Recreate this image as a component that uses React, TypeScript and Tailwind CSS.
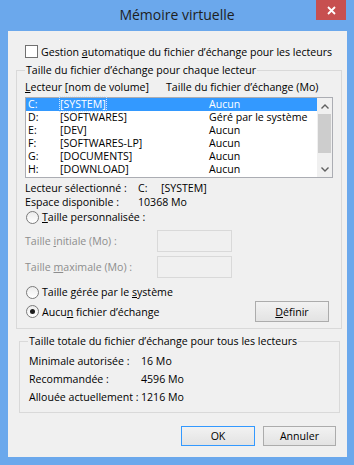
import React from "react";

const drives = [
  { letter: "C:", name: "[SYSTEM]", size: "Aucun" },
  { letter: "D:", name: "[SOFTWARES]", size: "Géré par le système" },
  { letter: "E:", name: "[DEV]", size: "Aucun" },
  { letter: "F:", name: "[SOFTWARES-LP]", size: "Aucun" },
  { letter: "G:", name: "[DOCUMENTS]", size: "Aucun" },
  { letter: "H:", name: "[DOWNLOAD]", size: "Aucun" },
];

function Radio({ checked }: { checked?: boolean }) {
  return (
    <span className="flex h-[13px] w-[13px] shrink-0 items-center justify-center rounded-full border border-[#7a7a7a] bg-gradient-to-b from-[#ececec] to-white">
      {checked && <span className="h-[5px] w-[5px] rounded-full bg-[#1c1c1c]" />}
    </span>
  );
}

function Button({ children, primary }: { children: React.ReactNode; primary?: boolean }) {
  return (
    <div
      className={
        "flex h-[20px] items-center justify-center border bg-gradient-to-b from-[#f2f2f2] to-[#e3e3e3] " +
        (primary ? "border-[#3399ff]" : "border-[#acacac]")
      }
    >
      {children}
    </div>
  );
}

export default function App() {
  return (
    <div className="flex h-[465px] w-[354px] flex-col bg-[#6ba8ec] pb-[8px] pl-[8px] pr-[7px] font-['Segoe_UI','Open_Sans',sans-serif] text-[10.6px] leading-[14px] text-black">
      {/* title bar */}
      <div className="relative -ml-[8px] -mr-[7px] flex h-[31px] shrink-0 items-start justify-center">
        <span className="pt-[6px] text-[14px] leading-[18px] text-[#1e1e1e]">Mémoire virtuelle</span>
        <div className="absolute right-[8px] top-0 flex h-[20px] w-[30px] items-center justify-center bg-[#c75050]">
          <svg width="9" height="9" viewBox="0 0 9 9">
            <path d="M1 1 L8 8 M8 1 L1 8" stroke="white" strokeWidth="1.8" />
          </svg>
        </div>
      </div>

      {/* client area */}
      <div className="flex flex-1 flex-col bg-[#f0f0f0]">
        <div className="ml-[17px] mt-[14px] flex h-[13px] items-center gap-[3px]">
          <span className="h-[13px] w-[13px] border border-[#707070] bg-white" />
          <span className="whitespace-nowrap">
            Gestion <u>a</u>utomatique du fichier d’échange pour les lecteurs
          </span>
        </div>

        <fieldset className="ml-[8px] mt-[5px] w-[325px] border border-[#d9d9d9] px-[8px] pb-[6px]">
          <legend className="h-[15px] px-[1px] leading-[15px]">Taille du fichier d’échange pour chaque lecteur</legend>

          <div className="mt-[2px] flex h-[14px]">
            <span className="w-[141px] whitespace-nowrap">
              <u>L</u>ecteur [nom de volume]
            </span>
            <span className="whitespace-nowrap">Taille du fichier d’échange (Mo)</span>
          </div>

          <div className="mt-[3px] flex h-[81px] w-[308px] border border-[#abadb3] bg-white">
            <div className="flex flex-1 flex-col">
              {drives.map((d, i) => (
                <div
                  key={d.letter}
                  className={"flex h-[13px] items-center pl-[2px] leading-[13px] " + (i === 0 ? "bg-[#3399ff] text-white" : "")}
                >
                  <span className="w-[32px]">{d.letter}</span>
                  <span className="w-[149px]">
                    <span className={i === 0 ? "outline-1 outline-dotted outline-[#cfe6ff]" : ""}>{d.name}</span>
                  </span>
                  <span className="whitespace-nowrap">{d.size}</span>
                </div>
              ))}
            </div>
            <div className="flex w-[15px] flex-col items-center bg-[#f0f0f0]">
              <div className="flex h-[16px] items-center justify-center">
                <svg width="8" height="5" viewBox="0 0 8 5">
                  <path d="M0.5 4.5 L4 1 L7.5 4.5" stroke="#606060" strokeWidth="1.4" fill="none" />
                </svg>
              </div>
              <div className="h-[39px] w-[13px] bg-[#cdcdcd]" />
              <div className="flex-1" />
              <div className="flex h-[16px] items-center justify-center">
                <svg width="8" height="5" viewBox="0 0 8 5">
                  <path d="M0.5 0.5 L4 4 L7.5 0.5" stroke="#606060" strokeWidth="1.4" fill="none" />
                </svg>
              </div>
            </div>
          </div>

          <div className="mt-[3px] flex h-[14px] whitespace-nowrap">
            <span className="w-[113px]">Lecteur sélectionné :</span>
            <span className="w-[23px]">C:</span>
            <span>[SYSTEM]</span>
          </div>
          <div className="flex h-[14px] whitespace-nowrap">
            <span className="w-[113px]">Espace disponible :</span>
            <span>10368 Mo</span>
          </div>

          <div className="mt-[1px] flex h-[14px] items-center gap-[3px] pl-[1px]">
            <Radio />
            <span>
              <u>T</u>aille personnalisée :
            </span>
          </div>

          <div className="mt-[6px] flex h-[22px] items-center text-[#8d8d8d]">
            <span className="w-[132px] whitespace-nowrap">
              Taille <u>i</u>nitiale (Mo) :
            </span>
            <div className="h-[22px] w-[75px] border border-[#d9d9d9] bg-[#f0f0f0]" />
          </div>
          <div className="mt-[4px] flex h-[22px] items-center text-[#8d8d8d]">
            <span className="w-[132px] whitespace-nowrap">
              Taille <u>m</u>aximale (Mo) :
            </span>
            <div className="h-[22px] w-[75px] border border-[#d9d9d9] bg-[#f0f0f0]" />
          </div>

          <div className="mt-[7px] flex h-[14px] items-center gap-[3px] pl-[1px]">
            <Radio />
            <span>
              Taille gérée par le <u>s</u>ystème
            </span>
          </div>
          <div className="mt-[2px] flex h-[21px] items-center justify-between">
            <div className="flex items-center gap-[3px] pl-[1px]">
              <Radio checked />
              <span>
                Aucu<u>n</u> fichier d’échange
              </span>
            </div>
            <div className="mr-[4px] w-[74px]">
              <div className="flex h-[21px] items-center justify-center border border-[#acacac] bg-gradient-to-b from-[#f2f2f2] to-[#e3e3e3]">
                <span>
                  <u>D</u>éfinir
                </span>
              </div>
            </div>
          </div>
        </fieldset>

        <fieldset className="ml-[11px] mt-[5px] w-[321px] border border-[#d9d9d9] px-[8px] pb-[6px]">
          <legend className="h-[15px] px-[1px] leading-[15px]">Taille totale du fichier d’échange pour tous les lecteurs</legend>
          <div className="mt-[3px] flex flex-col pl-[1px]">
            {[
              ["Minimale autorisée :", "16 Mo"],
              ["Recommandée :", "4596 Mo"],
              ["Allouée actuellement :", "1216 Mo"],
            ].map(([label, value]) => (
              <div key={label} className="flex h-[18px] items-center whitespace-nowrap">
                <span className="w-[112px] shrink-0">{label}</span>
                <span>{value}</span>
              </div>
            ))}
          </div>
        </fieldset>

        <div className="mr-[11px] mt-[13px] flex justify-end gap-[8px]">
          <div className="w-[74px]">
            <Button primary>OK</Button>
          </div>
          <div className="w-[73px]">
            <Button>Annuler</Button>
          </div>
        </div>
      </div>
    </div>
  );
}
